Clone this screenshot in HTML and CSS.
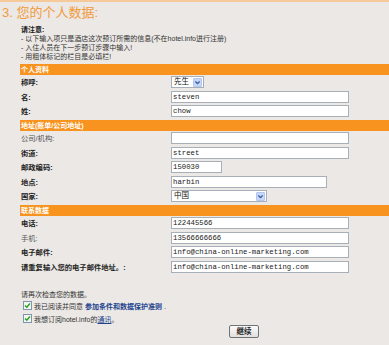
FILE: index.html
```html
<!DOCTYPE html>
<html lang="zh">
<head>
<meta charset="utf-8">
<title>您的个人数据</title>
<link rel="stylesheet" href="styles.css">
</head>
<body>
<div class="page">
  <h1 class="title">3. 您的个人数据:</h1>
  <div class="notes">
    <p class="notice">请注意:</p>
    <p>- 以下输入项只是酒店这次预订所需的信息(不在hotel.info进行注册)</p>
    <p>- 入住人员在下一步预订步骤中输入!</p>
    <p>- 用粗体标记的栏目是必填栏!</p>
  </div>
  <div class="form">
    <div class="section">
      <div class="bar">个人资料</div>
      <div class="row"><span class="label req">称呼:</span>
        <div class="select sel-title"><span class="sel-text">先生</span><span class="sel-arrow"><svg viewBox="0 0 8 8" width="7" height="7"><path d="M1.5 2.8 L4 5.2 L6.5 2.8" fill="none" stroke="#3d5fa8" stroke-width="1.5"/></svg></span></div>
      </div>
      <div class="row"><span class="label req">名:</span><input class="field full" type="text" value="steven"></div>
      <div class="row"><span class="label req">姓:</span><input class="field full" type="text" value="chow"></div>
    </div>
    <div class="section">
      <div class="bar">地址(账单/公司地址)</div>
      <div class="row"><span class="label">公司/机构:</span><input class="field full" type="text" value=""></div>
      <div class="row"><span class="label req">街道:</span><input class="field full" type="text" value="street"></div>
      <div class="row"><span class="label req">邮政编码:</span><input class="field zip" type="text" value="150030"></div>
      <div class="row"><span class="label req">地点:</span><input class="field city" type="text" value="harbin"></div>
      <div class="row"><span class="label req">国家:</span>
        <div class="select sel-country"><span class="sel-text">中国</span><span class="sel-arrow"><svg viewBox="0 0 8 8" width="7" height="7"><path d="M1.5 2.8 L4 5.2 L6.5 2.8" fill="none" stroke="#3d5fa8" stroke-width="1.5"/></svg></span></div>
      </div>
    </div>
    <div class="section">
      <div class="bar">联系数据</div>
      <div class="row"><span class="label req">电话:</span><input class="field full" type="text" value="122445566"></div>
      <div class="row"><span class="label">手机:</span><input class="field full" type="text" value="13566666666"></div>
      <div class="row"><span class="label req">电子邮件:</span><input class="field full" type="text" value="info@china-online-marketing.com"></div>
      <div class="row"><span class="label req">请重复输入您的电子邮件地址。:</span><input class="field full" type="text" value="info@china-online-marketing.com"></div>
    </div>
  </div>
  <div class="footer">
    <p class="check-intro">请再次检查您的数据。</p>
    <div class="check"><span class="box"><svg viewBox="0 0 8 8" width="7" height="7"><path d="M1.2 4 L3.2 6 L6.8 1.8" fill="none" stroke="#21a121" stroke-width="1.6"/></svg></span><span>我已阅读并同意 <a class="terms">参加条件和数据保护准则</a> .</span></div>
    <div class="check"><span class="box"><svg viewBox="0 0 8 8" width="7" height="7"><path d="M1.2 4 L3.2 6 L6.8 1.8" fill="none" stroke="#21a121" stroke-width="1.6"/></svg></span><span>我想订阅hotel.info的<a class="news">通讯</a>。</span></div>
    <div class="actions"><button class="btn" type="button">继续</button></div>
  </div>
</div>
</body>
</html>
```

FILE: styles.css
```css
* { box-sizing: border-box; }
html, body { margin: 0; padding: 0; }
body {
  background: #ebe8e5;
  font-family: "Liberation Sans", "Noto Sans CJK SC", sans-serif;
  font-size: 7px;
  color: #333;
}
.page {
  border-top: 2px solid #f6c99a;
  height: 345px;
  overflow: hidden;
}
.title {
  margin: 3px 0 0 2px;
  font-size: 13px;
  line-height: 16px;
  font-weight: normal;
  color: #f29a3a;
  font-family: "Liberation Sans", "Noto Sans CJK SC", sans-serif;
}
.notes {
  margin: 4px 0 0 21px;
  line-height: 9px;
}
.notes p { margin: 0; }
.notice { font-weight: bold; color: #222; }
.form {
  margin-top: 3px;
  padding-left: 20px;
}
.section + .section { margin-top: 1px; }
.bar {
  height: 11px;
  line-height: 11px;
  background: #f7931e;
  color: #fff;
  font-weight: bold;
  padding-left: 1px;
}
.row {
  display: grid;
  grid-template-columns: 150px 1fr;
  align-items: center;
  height: 14.6px;
  padding-left: 1px;
}
.label { color: #555; font-size: 7.3px; }
.label.req { font-weight: bold; color: #222; }
.field {
  display: block;
  height: 12px;
  margin: 0;
  padding: 0 0 0 1px;
  border: 1px solid #a7b0b8;
  background: #fff;
  font-family: "Liberation Mono", monospace;
  font-size: 7.3px;
  line-height: 10px;
  color: #222;
  outline: none;
}
.full { width: 178px; }
.zip { width: 51px; }
.city { width: 156px; }
.select {
  display: flex;
  align-items: center;
  height: 12px;
  border: 1px solid #a7b0b8;
  background: #fff;
  padding: 0 1px 0 2px;
}
.sel-title { width: 33px; }
.sel-country { width: 96px; }
.sel-text {
  flex: 1;
  font-size: 7.5px;
  line-height: 10px;
  color: #111;
}
.sel-arrow {
  width: 9px;
  height: 9px;
  display: flex;
  align-items: center;
  justify-content: center;
  background: #c7d7f7;
  border: 1px solid #b2c6ee;
  border-radius: 1px;
}
.footer {
  margin-top: 16px;
  padding-left: 21px;
}
.check-intro {
  margin: 0;
  line-height: 9px;
}
.check {
  display: flex;
  align-items: center;
  gap: 2px;
  height: 13px;
  margin-left: 2px;
}
.box {
  width: 9px;
  height: 9px;
  border: 1px solid #7e96ad;
  background: #f4f4f2;
  display: flex;
  align-items: center;
  justify-content: center;
}
.terms {
  color: #1d438f;
  font-weight: bold;
  text-decoration: none;
}
.news {
  color: #1d438f;
  text-decoration: underline;
}
.actions {
  padding-left: 208px;
}
.btn {
  width: 30px;
  height: 13px;
  padding: 0;
  margin: 0;
  border: 1px solid #6f747a;
  border-radius: 2px;
  background: linear-gradient(#fbfbfa, #e0dfdc);
  font-family: "Liberation Sans", "Noto Sans CJK SC", sans-serif;
  font-size: 7.5px;
  font-weight: bold;
  color: #222;
  line-height: 11px;
}
```
